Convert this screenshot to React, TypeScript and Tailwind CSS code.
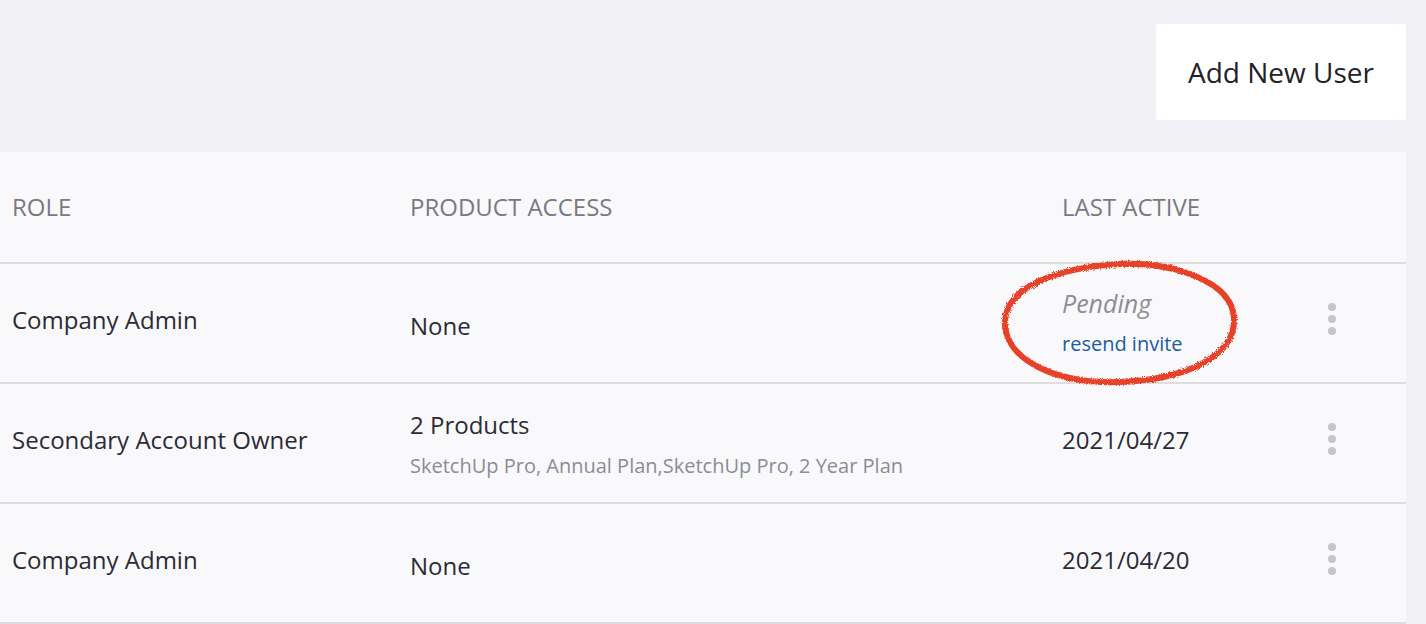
import { FC } from 'react';

type Row = {
  role: string;
  product: string;
  productDetail?: string;
  lastActive?: string;
  pending?: boolean;
};

const ROWS: Row[] = [
  { role: 'Company Admin', product: 'None', pending: true },
  {
    role: 'Secondary Account Owner',
    product: '2 Products',
    productDetail: 'SketchUp Pro, Annual Plan,SketchUp Pro, 2 Year Plan',
    lastActive: '2021/04/27',
  },
  { role: 'Company Admin', product: 'None', lastActive: '2021/04/20' },
];

const font = { fontFamily: '"Open Sans", "Noto Sans", sans-serif' };

const KebabDots: FC = () => (
  <div className="flex flex-col items-center gap-[4px]">
    <span className="block h-[8px] w-[8px] rounded-full bg-[#c5c5cc]" />
    <span className="block h-[8px] w-[8px] rounded-full bg-[#c5c5cc]" />
    <span className="block h-[8px] w-[8px] rounded-full bg-[#c5c5cc]" />
  </div>
);

// hand drawn red circle around the pending state
const Scribble: FC = () => (
  <svg
    className="pointer-events-none absolute left-[996px] top-[-8px]"
    width="250"
    height="136"
    viewBox="0 0 250 136"
  >
    <defs>
      <filter id="rough" x="-10%" y="-10%" width="120%" height="120%">
        <feTurbulence type="fractalNoise" baseFrequency="1.2" numOctaves="2" seed="3" />
        <feDisplacementMap in="SourceGraphic" scale="4" />
      </filter>
    </defs>
    <path
      d="M120 8 C 180 6, 236 26, 238 62 C 240 100, 190 124, 122 126 C 60 128, 10 104, 9 68 C 8 34, 54 12, 124 8 C 150 7, 170 10, 186 15"
      fill="none"
      stroke="#e6432b"
      strokeWidth="6"
      strokeLinecap="round"
      filter="url(#rough)"
    />
  </svg>
);

const App: FC = () => {
  return (
    <div className="h-[624px] w-[1426px] overflow-hidden bg-[#f2f2f6]" style={font}>
      <div className="flex h-[152px] items-start justify-end pr-[20px] pt-[24px]">
        <button className="flex h-[96px] w-[250px] items-center justify-center bg-white text-[28px] text-[#222228]">
          Add New User
        </button>
      </div>

      <div className="w-[1406px] bg-[#f9f9fb]">
        <div className="flex h-[112px] items-center border-b-2 border-[#dededf] text-[24px] uppercase text-[#7a7a7e]">
          <div className="w-[410px] pl-[12px]">Role</div>
          <div className="w-[652px]">Product Access</div>
          <div className="w-[240px]">Last Active</div>
          <div className="w-[60px]" />
        </div>

        {ROWS.map((row, i) => (
          <div
            key={i}
            className="relative flex h-[120px] items-center border-b-2 border-[#dededf] pb-[6px] text-[24px] text-[#2b2b36]"
          >
            <div className="w-[410px] pl-[12px]">{row.role}</div>
            <div className="w-[652px]">
              {row.productDetail ? (
                <div className="mt-[8px] flex flex-col">
                  <span className="leading-[32px]">{row.product}</span>
                  <span className="mt-[12px] text-[20px] leading-[26px] text-[#8c8c94]">
                    {row.productDetail}
                  </span>
                </div>
              ) : (
                <span className="mt-[12px] block">{row.product}</span>
              )}
            </div>
            <div className="w-[240px]">
              {row.pending ? (
                <div className="mt-[4px] flex flex-col">
                  <span className="text-[25px] italic leading-[32px] text-[#8d8d95]">Pending</span>
                  <span className="mt-[12px] text-[20px] leading-[26px] text-[#1c5c9f]">
                    resend invite
                  </span>
                </div>
              ) : (
                <span>{row.lastActive}</span>
              )}
            </div>
            <div className="flex w-[60px] justify-center pb-[2px]">
              <KebabDots />
            </div>
            {row.pending && <Scribble />}
          </div>
        ))}
      </div>
    </div>
  );
};

export default App;
